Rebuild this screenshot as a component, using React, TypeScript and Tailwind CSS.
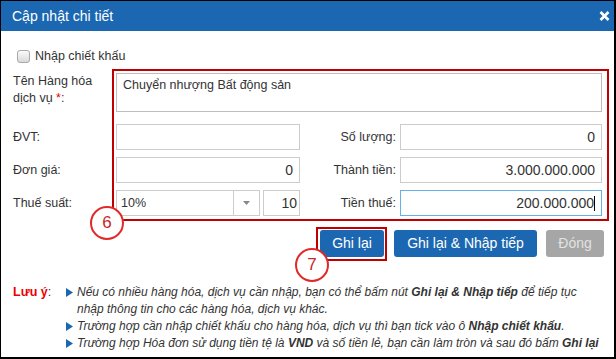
import React from "react";

const Tri = () => (
  <svg width="7" height="9" viewBox="0 0 7 9" className="mt-[4px] shrink-0">
    <path d="M0 0 L7 4.5 L0 9 Z" fill="#1b67b1" />
  </svg>
);

export default function App() {
  return (
    <div className="relative w-[616px] h-[359px] overflow-hidden bg-white border-t border-l border-r-2 border-b-2 border-black font-['Liberation_Sans',Arial,sans-serif] text-[12px] text-[#333]">
      {/* header */}
      <div className="h-[30px] bg-[#1b67b1] flex items-center justify-between pl-[11px] pr-[4px]">
        <span className="text-white text-[14px] leading-none">Cập nhật chi tiết</span>
        <svg width="11" height="10" viewBox="0 0 11 10">
          <path d="M1.5 1 L9.5 9 M9.5 1 L1.5 9" stroke="white" strokeWidth="2.6" />
        </svg>
      </div>

      {/* checkbox row */}
      <div className="mt-[19px] ml-[16px] h-[13px] flex items-center">
        <span className="w-[13px] h-[13px] rounded-[3px] border border-[#a9a9a9] bg-gradient-to-b from-[#fbfbfb] to-[#d9d9d9]" />
        <span className="ml-[5px] leading-none text-[12.5px]">Nhập chiết khấu</span>
      </div>

      {/* form */}
      <div className="ml-[12px] mt-[10px]">
        <div className="flex">
          <div className="w-[103px] leading-[17px] text-[12.5px]">
            Tên Hàng hóa
            <br />
            dịch vụ <span className="text-[#e00]">*</span>:
          </div>
          <div className="w-[486px] h-[39px] border border-[#bdbdbd] pl-[6px] pt-[3px] leading-[17px] text-[12.5px]">
            Chuyển nhượng Bất động sản
          </div>
        </div>

        <div className="flex items-center mt-[12px] text-[12.5px]">
          <div className="w-[103px]">ĐVT:</div>
          <div className="w-[184px] h-[26px] border border-[#ccc]" />
          <div className="w-[100px] pr-[4px] text-right">Số lượng:</div>
          <div className="w-[202px] h-[26px] border border-[#ccc] flex items-center justify-end pr-[6px] text-[14px]">0</div>
        </div>

        <div className="flex items-center mt-[7px] text-[12.5px]">
          <div className="w-[103px]">Đơn giá:</div>
          <div className="w-[184px] h-[26px] border border-[#ccc] flex items-center justify-end pr-[6px] text-[14px]">0</div>
          <div className="w-[100px] pr-[4px] text-right">Thành tiền:</div>
          <div className="w-[202px] h-[26px] border border-[#ccc] flex items-center justify-end pr-[6px] text-[14px]">3.000.000.000</div>
        </div>

        <div className="flex items-center mt-[7px] text-[12.5px]">
          <div className="w-[103px]">Thuế suất:</div>
          <div className="w-[144px] h-[26px] border border-[#ccc] flex items-center">
            <span className="flex-1 pl-[4px]">10%</span>
            <span className="w-[26px] h-full border-l border-[#ccc] flex items-center justify-center">
              <svg width="7" height="4" viewBox="0 0 7 4">
                <path d="M0 0 L7 0 L3.5 4 Z" fill="#888" />
              </svg>
            </span>
          </div>
          <div className="ml-[3px] w-[37px] h-[26px] border border-[#ccc] flex items-center justify-end pr-[2px] text-[14px]">10</div>
          <div className="w-[100px] pr-[4px] text-right">Tiền thuế:</div>
          <div className="w-[202px] h-[26px] border border-[#66afe9] flex items-center justify-end pr-[6px] text-[14px]">
            <span>200.000.000</span>
            <span className="w-px h-[15px] bg-black" />
          </div>
        </div>
      </div>

      {/* buttons */}
      <div className="mt-[14px] flex justify-end pr-[10px] text-[14px]">
        <button className="w-[64px] h-[27px] rounded-[3px] bg-[#1b67b1] text-white">Ghi lại</button>
        <button className="ml-[10px] w-[143px] h-[27px] rounded-[3px] bg-[#1b67b1] text-white">Ghi lại &amp; Nhập tiếp</button>
        <button className="ml-[9px] w-[58px] h-[27px] rounded-[3px] bg-[#a6a6a6] text-[#e2e2e2]">Đóng</button>
      </div>

      {/* notes */}
      <div className="mt-[27px] ml-[12px] flex leading-[17px]">
        <div className="w-[53px] shrink-0 text-[12.5px]">
          <span className="text-[#e00] font-bold">Lưu ý</span>:
        </div>
        <div className="flex flex-col italic whitespace-nowrap text-[12px]">
          <div className="flex">
            <Tri />
            <div className="ml-[4px]">
              Nếu có nhiều hàng hóa, dịch vụ cần nhập, bạn có thể bấm nút <b>Ghi lại &amp; Nhập tiếp</b> để tiếp tục
              <br />
              nhập thông tin cho các hàng hóa, dịch vụ khác.
            </div>
          </div>
          <div className="flex">
            <Tri />
            <div className="ml-[4px]">
              Trường hợp cần nhập chiết khấu cho hàng hóa, dịch vụ thì bạn tick vào ô <b>Nhập chiết khấu</b>.
            </div>
          </div>
          <div className="flex">
            <Tri />
            <div className="ml-[4px]">
              Trường hợp Hóa đơn sử dụng tiền tệ là <b>VND</b> và số tiền lẻ, bạn cần làm tròn và sau đó bấm <b>Ghi lại</b>
            </div>
          </div>
        </div>
      </div>

      {/* annotations */}
      <div className="absolute left-[111px] top-[68px] w-[497px] h-[152px] border-2 border-[#c00000]" />
      <div className="absolute left-[315px] top-[226px] w-[71px] h-[34px] border-2 border-[#c00000]" />
      <div className="absolute left-[89px] top-[205px] w-[34px] h-[34px] rounded-full border-2 border-[#e02a2a] bg-white flex items-center justify-center text-[17px] text-[#c62828]">
        6
      </div>
      <div className="absolute left-[294px] top-[247px] w-[34px] h-[34px] rounded-full border-2 border-[#e02a2a] bg-white flex items-center justify-center text-[17px] text-[#c62828]">
        7
      </div>
    </div>
  );
}
